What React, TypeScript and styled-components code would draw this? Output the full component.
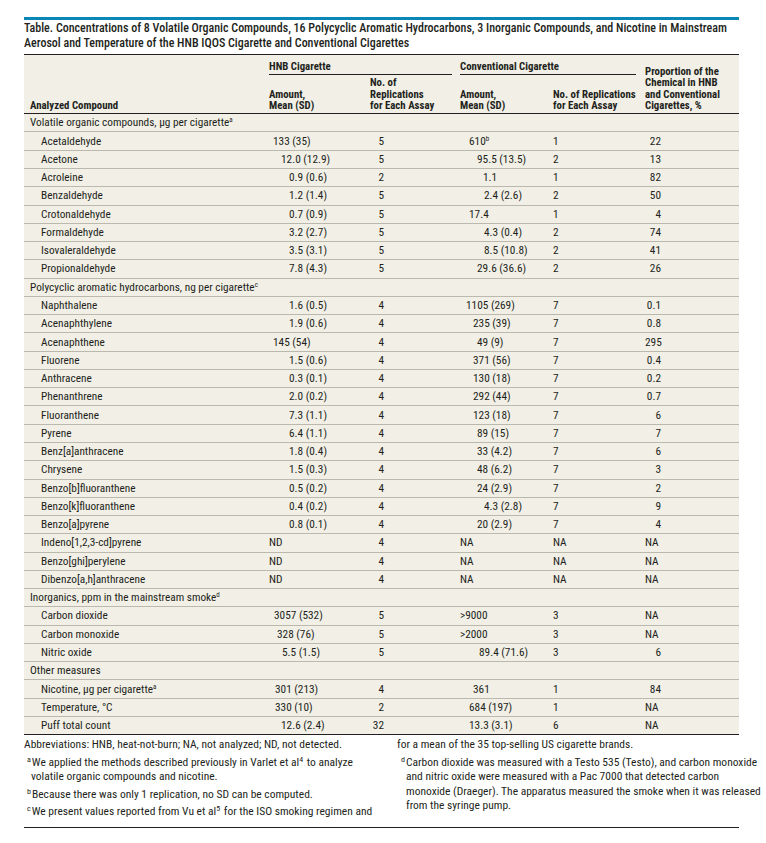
import React from "react";
import styled, { createGlobalStyle } from "styled-components";

const COLS = "245px 101px 90px 93px 92px 94px";
const INK = "#231f20";
const RULE = "#bbb9ae";
const CREAM = "#f1efe6";

const GlobalStyle = createGlobalStyle`
  html, body {
    margin: 0;
    padding: 0;
    background: #ffffff;
  }
  body {
    font-family: Roboto, "Liberation Sans", Arial, sans-serif;
    font-stretch: 75%;
    color: ${INK};
  }
`;

// Page wrapper
const Page = styled.div`
  width: 715px;
  margin-left: 24px;
  padding-top: 17px;
`;

// Table caption with the blue bar above it
const Caption = styled.div`
  border-top: 3px solid #0a87b7;
  border-bottom: 1.5px solid ${INK};
  padding: 1px 0 3px;
  font-size: 12px;
  line-height: 15px;
  font-weight: 500;
  white-space: nowrap;
`;

// Column headers
const Head = styled.div`
  display: grid;
  grid-template-columns: ${COLS};
  background: ${CREAM};
  border-bottom: 1.5px solid ${INK};
  padding-bottom: 2px;
  font-size: 10.8px;
  line-height: 11.3px;
  font-weight: 700;
  white-space: nowrap;
`;

const HeadCell = styled.div<{ $col: string; $row: string; $pad?: number; $top?: number }>`
  grid-column: ${(p) => p.$col};
  grid-row: ${(p) => p.$row};
  align-self: end;
  padding-left: ${(p) => p.$pad ?? 0}px;
  margin-top: ${(p) => p.$top ?? 0}px;
`;

const GroupLabel = styled.div<{ $col: string; $gap: number }>`
  grid-column: ${(p) => p.$col};
  grid-row: 1;
  margin-right: ${(p) => p.$gap}px;
  padding: 6px 0 2px;
  border-bottom: 1px solid ${INK};
`;

// Body rows
const Body = styled.div`
  background: ${CREAM};
  font-size: 11.3px;
`;

const Row = styled.div`
  display: grid;
  grid-template-columns: ${COLS};
  align-items: center;
  height: 18.28px;
  box-sizing: border-box;
  border-bottom: 1px solid ${RULE};
  white-space: nowrap;

  &:last-child {
    border-bottom: 1.5px solid ${INK};
  }
`;

const SectionCell = styled.div`
  grid-column: 1 / -1;
  padding-left: 6px;
`;

const Cell = styled.div<{ $at?: number }>`
  padding-left: ${(p) => p.$at ?? 0}px;
`;

const RightValue = styled.span<{ $w: number }>`
  display: inline-block;
  width: ${(p) => p.$w}px;
  text-align: right;
`;

const Sup = styled.sup`
  font-size: 7px;
  line-height: 0;
  vertical-align: 4px;
`;

// Footnotes
const Notes = styled.div`
  display: grid;
  grid-template-columns: 373px 342px;
  padding: 2px 0 8px;
  border-bottom: 1.5px solid ${INK};
  font-size: 11.5px;
  line-height: 14.5px;
  white-space: nowrap;
`;

const NoteColumn = styled.div`
  display: flex;
  flex-direction: column;
  gap: 3px;
`;

const Note = styled.p<{ $indent?: number; $hang?: number }>`
  margin: 0;
  padding-left: ${(p) => p.$indent ?? 0}px;
  text-indent: ${(p) => -(p.$hang ?? 0)}px;
`;

const NoteSup = styled.sup`
  font-size: 8px;
  line-height: 0;
  vertical-align: 4px;
  margin-right: 1px;
`;

type Item = {
  name: string;
  hnb: string;
  hnbAt: number;
  hnbN: string;
  conv: string;
  convAt: number;
  convN: string;
  prop: string;
};

type Section = { title: string; note?: string; items: Item[] };

const it = (
  name: string,
  hnb: string,
  hnbAt: number,
  hnbN: string,
  conv: string,
  convAt: number,
  convN: string,
  prop: string
): Item => ({ name, hnb, hnbAt, hnbN, conv, convAt, convN, prop });

const sections: Section[] = [
  {
    title: "Volatile organic compounds, µg per cigarette",
    note: "a",
    items: [
      it("Acetaldehyde", "133 (35)", 4, "5", "610^b", 9, "1", "22"),
      it("Acetone", "12.0 (12.9)", 12, "5", "95.5 (13.5)", 17, "2", "13"),
      it("Acroleine", "0.9 (0.6)", 20, "2", "1.1", 23, "1", "82"),
      it("Benzaldehyde", "1.2 (1.4)", 20, "5", "2.4 (2.6)", 24, "2", "50"),
      it("Crotonaldehyde", "0.7 (0.9)", 20, "5", "17.4", 9, "1", "4"),
      it("Formaldehyde", "3.2 (2.7)", 20, "5", "4.3 (0.4)", 24, "2", "74"),
      it("Isovaleraldehyde", "3.5 (3.1)", 20, "5", "8.5 (10.8)", 24, "2", "41"),
      it("Propionaldehyde", "7.8 (4.3)", 20, "5", "29.6 (36.6)", 17, "2", "26"),
    ],
  },
  {
    title: "Polycyclic aromatic hydrocarbons, ng per cigarette",
    note: "c",
    items: [
      it("Naphthalene", "1.6 (0.5)", 20, "4", "1105 (269)", 6, "7", "0.1"),
      it("Acenaphthylene", "1.9 (0.6)", 20, "4", "235 (39)", 13, "7", "0.8"),
      it("Acenaphthene", "145 (54)", 4, "4", "49 (9)", 17, "7", "295"),
      it("Fluorene", "1.5 (0.6)", 20, "4", "371 (56)", 13, "7", "0.4"),
      it("Anthracene", "0.3 (0.1)", 20, "4", "130 (18)", 13, "7", "0.2"),
      it("Phenanthrene", "2.0 (0.2)", 20, "4", "292 (44)", 13, "7", "0.7"),
      it("Fluoranthene", "7.3 (1.1)", 20, "4", "123 (18)", 13, "7", "6"),
      it("Pyrene", "6.4 (1.1)", 20, "4", "89 (15)", 17, "7", "7"),
      it("Benz[a]anthracene", "1.8 (0.4)", 20, "4", "33 (4.2)", 17, "7", "6"),
      it("Chrysene", "1.5 (0.3)", 20, "4", "48 (6.2)", 17, "7", "3"),
      it("Benzo[b]fluoranthene", "0.5 (0.2)", 20, "4", "24 (2.9)", 17, "7", "2"),
      it("Benzo[k]fluoranthene", "0.4 (0.2)", 20, "4", "4.3 (2.8)", 24, "7", "9"),
      it("Benzo[a]pyrene", "0.8 (0.1)", 20, "4", "20 (2.9)", 17, "7", "4"),
      it("Indeno[1,2,3-cd]pyrene", "ND", 0, "4", "NA", 0, "NA", "NA"),
      it("Benzo[ghi]perylene", "ND", 0, "4", "NA", 0, "NA", "NA"),
      it("Dibenzo[a,h]anthracene", "ND", 0, "4", "NA", 0, "NA", "NA"),
    ],
  },
  {
    title: "Inorganics, ppm in the mainstream smoke",
    note: "d",
    items: [
      it("Carbon dioxide", "3057 (532)", 5, "5", ">9000", 0, "3", "NA"),
      it("Carbon monoxide", "328 (76)", 8, "5", ">2000", 0, "3", "NA"),
      it("Nitric oxide", "5.5 (1.5)", 13, "5", "89.4 (71.6)", 19, "3", "6"),
    ],
  },
  {
    title: "Other measures",
    items: [
      it("Nicotine, µg per cigarette^a", "301 (213)", 6, "4", "361", 13, "1", "84"),
      it("Temperature, °C", "330 (10)", 6, "2", "684 (197)", 9, "1", "NA"),
      it("Puff total count", "12.6 (2.4)", 12, "32", "13.3 (3.1)", 9, "6", "NA"),
    ],
  },
];

// "610^b" -> 610 with a superscript b
const withSup = (text: string) => {
  const [main, sup] = text.split("^");
  return (
    <>
      {main}
      {sup && <Sup>{sup}</Sup>}
    </>
  );
};

const DataRow: React.FC<{ item: Item }> = ({ item }) => (
  <Row>
    <Cell $at={17}>{withSup(item.name)}</Cell>
    <Cell $at={item.hnbAt}>{item.hnb}</Cell>
    <Cell>
      <RightValue $w={14}>{item.hnbN}</RightValue>
    </Cell>
    <Cell $at={item.convAt}>{withSup(item.conv)}</Cell>
    <Cell>{item.convN}</Cell>
    <Cell>{item.prop === "NA" ? "NA" : <RightValue $w={16}>{item.prop}</RightValue>}</Cell>
  </Row>
);

const App: React.FC = () => (
  <>
    <GlobalStyle />
    <Page>
      <Caption>
        Table. Concentrations of 8 Volatile Organic Compounds, 16 Polycyclic Aromatic Hydrocarbons, 3 Inorganic
        Compounds, and Nicotine in Mainstream
        <br />
        Aerosol and Temperature of the HNB IQOS Cigarette and Conventional Cigarettes
      </Caption>

      <Head>
        <HeadCell $col="1" $row="1 / span 2" $pad={6}>
          Analyzed Compound
        </HeadCell>
        <GroupLabel $col="2 / span 2" $gap={8}>
          HNB Cigarette
        </GroupLabel>
        <GroupLabel $col="4 / span 2" $gap={9}>
          Conventional Cigarette
        </GroupLabel>
        <HeadCell $col="2" $row="2">
          Amount,
          <br />
          Mean (SD)
        </HeadCell>
        <HeadCell $col="3" $row="2" $top={2}>
          No. of
          <br />
          Replications
          <br />
          for Each Assay
        </HeadCell>
        <HeadCell $col="4" $row="2">
          Amount,
          <br />
          Mean (SD)
        </HeadCell>
        <HeadCell $col="5" $row="2">
          No. of Replications
          <br />
          for Each Assay
        </HeadCell>
        <HeadCell $col="6" $row="1 / span 2">
          Proportion of the
          <br />
          Chemical in HNB
          <br />
          and Conventional
          <br />
          Cigarettes, %
        </HeadCell>
      </Head>

      <Body>
        {sections.map((s) => (
          <React.Fragment key={s.title}>
            <Row>
              <SectionCell>
                {s.title}
                {s.note && <Sup>{s.note}</Sup>}
              </SectionCell>
            </Row>
            {s.items.map((item) => (
              <DataRow key={item.name} item={item} />
            ))}
          </React.Fragment>
        ))}
      </Body>

      <Notes>
        <NoteColumn>
          <Note>Abbreviations: HNB, heat-not-burn; NA, not analyzed; ND, not detected.</Note>
          <Note $indent={7} $hang={4}>
            <NoteSup>a</NoteSup>We applied the methods described previously in Varlet et al<NoteSup>4</NoteSup> to
            analyze
            <br />
            volatile organic compounds and nicotine.
          </Note>
          <Note $indent={7} $hang={4}>
            <NoteSup>b</NoteSup>Because there was only 1 replication, no SD can be computed.
          </Note>
          <Note $indent={7} $hang={4}>
            <NoteSup>c</NoteSup>We present values reported from Vu et al<NoteSup>5</NoteSup> for the ISO smoking
            regimen and
          </Note>
        </NoteColumn>
        <NoteColumn>
          <Note>for a mean of the 35 top-selling US cigarette brands.</Note>
          <Note $indent={9} $hang={5}>
            <NoteSup>d</NoteSup>Carbon dioxide was measured with a Testo 535 (Testo), and carbon monoxide
            <br />
            and nitric oxide were measured with a Pac 7000 that detected carbon
            <br />
            monoxide (Draeger). The apparatus measured the smoke when it was released
            <br />
            from the syringe pump.
          </Note>
        </NoteColumn>
      </Notes>
    </Page>
  </>
);

export default App;
